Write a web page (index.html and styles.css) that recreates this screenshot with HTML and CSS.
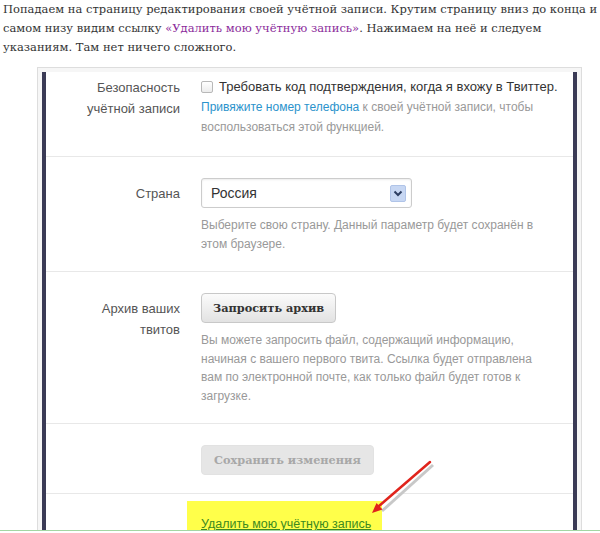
FILE: index.html
```html
<!DOCTYPE html>
<html lang="ru">
<head>
    <meta charset="UTF-8">
    <meta name="viewport" content="width=device-width, initial-scale=1.0">
    <title>Удаление учётной записи</title>
    <link rel="stylesheet" href="styles.css">
</head>
<body>
    <p class="intro">
        Попадаем на страницу редактирования своей учётной записи. Крутим страницу вниз до конца и<br>
        самом низу видим ссылку <a href="#">«Удалить мою учётную запись»</a>. Нажимаем на неё и следуем<br>
        указаниям. Там нет ничего сложного.
    </p>

    <div class="shot">
        <div class="card">
            <div class="card-inner">

                <!-- Безопасность -->
                <div class="row row-first">
                    <div class="label">Безопасность<br>учётной записи</div>
                    <div class="field">
                        <div class="check"><span class="check-box"></span>Требовать код подтверждения, когда я вхожу в Твиттер.</div>
                        <div class="help help-dark"><a href="#">Привяжите номер телефона</a> к своей учётной записи, чтобы<br>воспользоваться этой функцией.</div>
                    </div>
                </div>

                <!-- Страна -->
                <div class="row">
                    <div class="label">Страна</div>
                    <div class="field">
                        <div class="select">
                            <span>Россия</span>
                            <span class="select-arrow">
                                <svg width="10" height="7" viewBox="0 0 10 7"><path d="M1.5 1.5 L5 5 L8.5 1.5" fill="none" stroke="#2d3e62" stroke-width="2"/></svg>
                            </span>
                        </div>
                        <div class="help">Выберите свою страну. Данный параметр будет сохранён в<br>этом браузере.</div>
                    </div>
                </div>

                <!-- Архив -->
                <div class="row">
                    <div class="label">Архив ваших<br>твитов</div>
                    <div class="field">
                        <button class="btn">Запросить архив</button>
                        <div class="help">Вы можете запросить файл, содержащий информацию,<br>начиная с вашего первого твита. Ссылка будет отправлена<br>вам по электронной почте, как только файл будет готов к<br>загрузке.</div>
                    </div>
                </div>

                <!-- Сохранить -->
                <div class="row">
                    <div class="label"></div>
                    <div class="field">
                        <button class="btn btn-disabled" disabled>Сохранить изменения</button>
                    </div>
                </div>

                <!-- Удалить -->
                <div class="row row-last">
                    <div class="label"></div>
                    <div class="field">
                        <span class="delete"><a href="#">Удалить мою учётную запись</a></span>
                    </div>
                </div>
            </div>
        </div>

        <!-- красная стрелка поверх скриншота -->
        <svg class="arrow" width="85" height="70" viewBox="0 0 85 70">
            <line x1="73" y1="15" x2="22" y2="61" stroke="#c8c8c8" stroke-width="3"/>
            <line x1="70" y1="12" x2="19" y2="56" stroke="#e0241c" stroke-width="2.5" stroke-linecap="round"/>
            <polygon points="12,63 22.5,59.5 16.5,53" fill="#e0241c"/>
        </svg>
    </div>
</body>
</html>
```

FILE: styles.css
```css
body {
    margin: 0;
    background: #fff;
    overflow: hidden;
    font-family: "Liberation Sans", Arial, sans-serif;
}

.intro {
    margin: 0;
    padding: 0 0 0 3px;
    height: 67px;
    font-family: "DejaVu Serif", serif;
    font-size: 11.5px;
    line-height: 19px;
    color: #333;
    white-space: nowrap;
}

.intro a {
    color: #8b2b9b;
    text-decoration: none;
}

.shot {
    position: relative;
    height: 463px;
    overflow: hidden;
    border-bottom: 1px solid #a3d6a3;
}

.card {
    margin-left: 37px;
    width: 545px;
    height: 100%;
    box-sizing: border-box;
    border: 1px solid #ddd;
    border-bottom: none;
    padding: 4px 4px 0;
    background: #f6f6f6;
}

.card-inner {
    height: 100%;
    background: #fff;
    border-left: 4px solid #3b3b56;
    border-right: 4px solid #3b3b56;
}

.row {
    display: flex;
    padding: 21px 0 18px;
    border-bottom: 1px solid #e8e8e8;
}

.row-first {
    padding-top: 0;
    padding-bottom: 19px;
}

.row-first .field {
    padding-top: 4px;
}

.row-last {
    padding-top: 7px;
    border-bottom: none;
}

.label {
    width: 134px;
    padding-top: 5px;
    text-align: right;
    font-size: 13px;
    line-height: 21px;
    color: #555;
}

.field {
    margin-left: 21px;
    width: 360px;
}

.check {
    display: flex;
    align-items: center;
    gap: 6px;
    font-size: 13px;
    line-height: 21px;
    color: #333;
}

.check-box {
    width: 12px;
    height: 12px;
    border: 1px solid #b8b8b8;
    border-radius: 2px;
    background: linear-gradient(#fff, #ececec);
    box-sizing: border-box;
}

.help {
    margin-top: 8px;
    font-size: 12px;
    line-height: 18.5px;
    color: #999;
}

.help-dark {
    margin-top: 0;
    line-height: 20px;
}

.help a {
    color: #2b93cc;
    text-decoration: none;
}

.select {
    width: 211px;
    height: 30px;
    box-sizing: border-box;
    border: 1px solid #ccc;
    border-radius: 3px;
    display: flex;
    align-items: center;
    justify-content: space-between;
    padding: 0 5px 0 9px;
    font-size: 14px;
    color: #333;
    box-shadow: inset 0 1px 2px rgba(0, 0, 0, 0.08);
}

.select-arrow {
    width: 14px;
    height: 15px;
    display: flex;
    align-items: center;
    justify-content: center;
    background: #c7d7f3;
    border: 1px solid #b0c4e8;
    border-radius: 2px;
}

.btn {
    display: block;
    height: 30px;
    padding: 0 11px;
    font-family: "DejaVu Serif", serif;
    font-size: 11.3px;
    font-weight: bold;
    color: #333;
    border: 1px solid #c8c8c8;
    border-radius: 4px;
    background: linear-gradient(#fbfbfb, #e2e2e2);
}

.btn-disabled {
    padding: 0 12px;
    color: #a8a8a8;
    background: #e6e6e6;
    border-color: #e2e2e2;
}

.delete {
    display: inline-block;
    box-sizing: border-box;
    margin-left: -14px;
    padding: 13px 0 4px 14px;
    width: 195px;
    background: #ffff4a;
    font-size: 12.5px;
    line-height: 21px;
    white-space: nowrap;
}

.delete a {
    color: #3d8a1f;
    text-decoration: underline;
}

.arrow {
    position: absolute;
    left: 360px;
    top: 383px;
}
```
